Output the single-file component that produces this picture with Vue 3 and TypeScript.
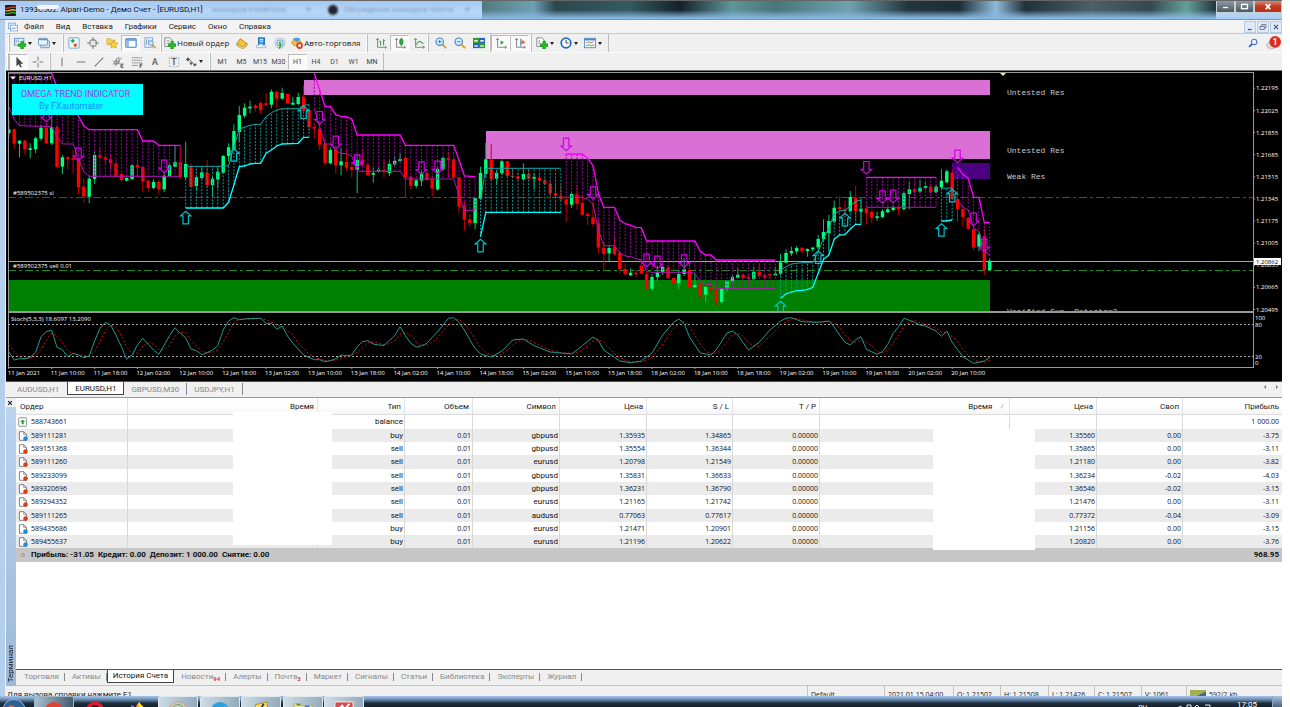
<script setup lang="ts">
type Candle = [up: 0 | 1, high: number, top: number, bottom: number, low: number]
type Point = [bar: number, level: number]
interface Band { tone: 'up' | 'down'; from: number; to: number; outer: Point[]; inner: Point[] }
interface Tool { icon: string; name: string; label?: string; menu?: boolean; pressed?: boolean }

const barX = (i: number) => Math.round((8.8 + i * 5.36) * 10) / 10
const levelY = (v: number) => Math.round((70 + v / 3) * 10) / 10
const stochY = (v: number) => Math.round((305 + v / 3) * 10) / 10

const candles: Candle[] = [
  [1,150,178,190,205],[0,175,178,221,238],[1,210,212,221,262],[0,210,212,238,254],[1,220,235,240,265],[1,200,205,238,250],
  [1,165,173,206,212],[0,160,174,220,222],[1,130,172,220,225],[0,168,171,291,292],[1,255,262,290,312],[0,258,262,267,298],
  [0,240,264,269,310],[0,262,265,352,372],[0,325,350,379,398],[1,318,326,380,400],[1,245,255,327,342],[0,235,256,262,268],
  [0,258,262,269,282],[0,255,268,280,300],[0,278,280,320,322],[0,308,312,330,335],[1,318,324,332,333],[1,282,286,327,330],
  [0,268,285,292,320],[0,290,291,334,365],[0,330,332,354,365],[1,328,336,354,358],[0,328,336,358,373],[1,308,317,358,366],
  [1,280,286,318,322],[1,228,276,291,292],[0,225,276,321,326],[1,215,282,322,330],[0,280,290,350,352],[1,315,322,348,362],
  [1,292,307,324,328],[0,270,308,345,355],[1,320,326,345,380],[1,292,305,328,355],[1,255,258,308,312],[1,220,232,258,275],
  [1,163,183,238,240],[1,108,135,186,215],[1,100,113,137,144],[1,92,110,115,130],[0,102,107,114,125],[0,95,99,120,132],
  [0,70,100,105,108],[1,58,65,104,115],[0,62,65,86,112],[1,53,69,86,88],[0,70,72,100,102],[1,80,98,104,105],
  [1,68,81,102,106],[0,45,80,122,125],[0,118,120,171,185],[0,160,171,176,205],[0,160,176,224,240],[0,205,221,279,288],
  [1,232,240,280,283],[0,236,240,285,310],[1,235,274,286,316],[0,240,276,293,302],[0,280,291,300,322],[1,255,270,300,370],
  [0,240,268,285,290],[0,280,284,316,318],[1,293,309,314,338],[1,292,299,304,308],[0,270,299,304,322],[1,272,281,309,318],
  [1,258,272,283,287],[1,250,267,273,277],[0,262,264,321,384],[0,318,320,347,358],[1,327,331,348,355],[1,300,309,332,348],
  [0,307,309,329,332],[0,315,328,356,380],[1,290,297,358,362],[1,260,264,298,302],[0,245,265,270,318],[0,262,268,323,325],
  [0,320,322,410,430],[0,392,407,449,482],[0,432,448,459,470],[1,380,384,459,478],[1,290,309,386,390],[1,218,268,312,320],
  [0,222,268,328,332],[1,300,309,326,345],[1,268,274,309,315],[0,272,273,318,320],[0,293,317,321,325],[0,310,319,327,330],
  [1,280,312,328,330],[0,295,312,327,328],[1,310,321,326,358],[0,315,324,331,335],[0,325,331,342,345],[0,330,342,370,385],
  [0,345,370,377,385],[0,345,378,388,395],[0,380,388,404,455],[1,365,372,404,415],[0,345,373,402,420],[0,375,399,434,438],
  [0,425,432,438,465],[0,395,442,462,470],[0,450,460,533,550],[0,515,533,552,600],[1,525,534,550,573],[0,495,530,552,555],
  [0,545,549,598,612],[0,580,597,613,615],[1,595,608,616,617],[0,600,608,613,622],[0,565,587,611,613],[0,606,613,656,658],
  [1,612,621,656,662],[1,585,606,621,632],[1,585,591,606,615],[0,588,592,624,628],[0,622,624,640,658],[1,600,612,640,658],
  [1,565,598,612,618],[0,580,600,652,653],[1,612,645,652,654],[0,640,642,676,686],[1,648,651,674,696],[0,645,652,658,668],
  [0,655,659,696,705],[1,655,656,696,702],[1,630,633,655,665],[1,615,621,634,640],[1,595,614,623,627],[0,613,614,624,630],
  [0,612,622,627,635],[1,590,605,627,630],[0,580,605,618,620],[0,612,616,621,625],[0,612,612,616,628],[1,590,611,616,618],
  [1,552,577,611,615],[1,538,549,578,580],[1,530,543,550,558],[1,528,534,544,553],[0,532,533,543,550],[1,535,537,543,560],
  [1,530,533,538,545],[1,495,507,532,540],[1,448,486,507,512],[1,435,453,489,545],[1,392,413,455,460],[0,378,411,417,425],
  [0,392,418,424,440],[1,363,381,424,428],[0,348,384,423,450],[1,385,416,425,460],[0,412,415,430,464],[0,420,426,443,460],
  [1,425,439,444,452],[1,418,424,441,445],[1,412,418,427,430],[1,405,412,420,425],[0,405,412,417,434],[1,365,370,417,422],
  [1,335,358,372,418],[0,355,358,365,370],[1,330,353,365,370],[1,335,349,354,360],[0,345,350,367,370],[1,345,350,367,370],
  [1,298,332,352,355],[1,298,304,337,340],[0,300,308,387,390],[0,380,387,417,455],[0,410,417,441,470],[0,440,443,476,480],
  [0,475,477,532,540],[1,485,493,530,543],[0,475,498,600,615],[1,565,572,600,601],
]

const bands: Band[] = [
  { tone: 'down', from: 0, to: 32,
    outer: [[0,10],[8,10],[9,52],[10,78],[11,100],[12,112],[13,138],[14,167],[15,179],[24,179],[25,213],[27,213],[28,226],[32,226]],
    inner: [[0,110],[1,148],[2,167],[8,170],[9,200],[10,222],[12,222],[13,265],[14,305],[15,319],[32,319]] },
  { tone: 'up', from: 33, to: 56,
    outer: [[33,414],[40,414],[41,397],[42,345],[43,290],[44,288],[45,282],[46,280],[47,280],[48,250],[49,240],[50,228],[51,222],[54,220],[55,202],[56,202]],
    inner: [[33,289],[40,289],[41,287],[42,230],[43,178],[44,171],[45,166],[46,163],[47,163],[48,140],[49,128],[50,120],[51,116],[54,116],[55,106],[56,104]] },
  { tone: 'down', from: 57, to: 87,
    outer: [[57,10],[58,60],[59,109],[60,109],[61,134],[62,139],[63,140],[64,147],[65,195],[73,195],[74,226],[83,226],[84,270],[85,318],[87,320]],
    inner: [[57,118],[58,170],[59,222],[60,222],[61,243],[62,250],[63,251],[64,258],[65,304],[73,304],[74,327],[83,327],[84,375],[85,421],[87,421]] },
  { tone: 'up', from: 88, to: 103, outer: [[88,500],[89,427],[103,427]], inner: [[88,390],[89,295],[103,295]] },
  { tone: 'down', from: 104, to: 143,
    outer: [[104,252],[107,252],[108,265],[109,287],[110,370],[111,412],[113,412],[114,450],[115,461],[116,465],[117,472],[118,473],[119,513],[128,513],[129,543],[130,555],[131,555],[132,570],[143,570]],
    inner: [[104,382],[107,382],[108,388],[109,402],[110,480],[111,527],[113,527],[114,548],[115,558],[116,560],[117,566],[118,570],[119,604],[120,607],[127,607],[128,610],[129,635],[130,643],[131,643],[132,655],[143,655]] },
  { tone: 'up', from: 144, to: 159,
    outer: [[144,685],[145,672],[146,666],[147,662],[148,661],[149,659],[150,652],[151,610],[152,568],[153,555],[154,508],[155,495],[156,494],[157,477],[158,463],[159,463]],
    inner: [[144,600],[145,590],[146,582],[147,580],[148,578],[150,577],[151,545],[152,505],[153,475],[154,432],[155,423],[156,421],[157,408],[158,394],[159,390]] },
  { tone: 'down', from: 160, to: 173, outer: [[160,322],[173,322]], inner: [[160,412],[173,412]] },
  { tone: 'up', from: 174, to: 176, outer: [[174,453],[175,453],[176,450]], inner: [[174,355],[175,355],[176,353]] },
  { tone: 'down', from: 177, to: 183,
    outer: [[177,292],[178,313],[179,325],[180,382],[181,382],[182,458],[183,458]],
    inner: [[177,390],[178,412],[179,420],[180,474],[181,485],[182,540],[183,558]] },
]

const downArrows: Point[] = [[7,155],[13,272],[29,308],[58,162],[61,236],[65,292],[77,313],[80,311],[104,242],[109,388],[119,590],[121,596],[126,592],[160,312],[163,400],[165,398],[177,278],[180,467],[182,545]]
const upArrows: Point[] = [[33,424],[42,236],[55,108],[88,508],[144,694],[151,543],[156,430],[174,461],[176,358]]

const stochKeys: Point[] = [
  ...[140,165,161,161,157,143,95,80,76,127,134,155,145,150,158,153,108,70,52,60,90,125,163,150,120,100,118,135,148,120,92,68,85,98,132,137,149,143,135,122,75,48,38,44,42,41,40,40,55,55,73,63,93,115,132,150,157,164,164,170,167,161,150,152,150,125,110,107,117,120,121,106,92,65,92,115,126,122,115].map((v, i): Point => [i, v]),
  [80,80],[82,40],[83,38],[84,52],[85,75],[86,104],[87,130],[88,147],[90,156],[92,138],[94,105],[96,102],[98,122],[101,141],[105,147],[107,122],[109,96],[110,106],[111,135],[114,168],[116,173],[118,168],[120,144],[122,90],[124,52],[125,42],[126,56],[127,96],[129,144],[131,150],[132,134],[134,84],[135,78],[136,90],[138,135],[140,112],[142,75],[144,48],[145,40],[146,38],[148,50],[151,52],[153,48],[154,66],[155,90],[156,112],[157,120],[158,104],[159,95],
  [160,133],[162,148],[163,140],[164,118],[165,85],[166,65],[167,40],[168,46],[169,52],[170,60],[171,63],[173,78],[174,94],[175,78],[176,112],[178,155],[180,175],[182,168],[183,157],
]

function valueAt(points: Point[], bar: number): number {
  for (let k = 1; k < points.length; k++) {
    const [b0, v0] = points[k - 1]
    const [b1, v1] = points[k]
    if (bar <= b1) return v0 + ((v1 - v0) * (bar - b0)) / (b1 - b0)
  }
  return points[points.length - 1][1]
}
const range = (a: number, b: number) => Array.from({ length: b - a + 1 }, (_, k) => a + k)
const line = (points: Point[]) => points.map(([b, v]) => `${barX(b)},${levelY(v)}`).join(' ')
const stems = (band: Band) => range(band.from, band.to)
  .map(b => `M${barX(b)} ${levelY(valueAt(band.outer, b))}V${levelY(valueAt(band.inner, b))}`).join('')

const stoch = range(0, 183).map(b => valueAt(stochKeys, b))
const signal = stoch.map((v, i) => i === 0 ? 118 : i === 1 ? 140 : (v + stoch[i - 1] + stoch[i - 2]) / 3)
const stochLine = (values: number[]) => values.map((v, i) => `${barX(i)},${stochY(v)}`).join(' ')

const prices = ['1.22195', '1.22025', '1.21855', '1.21685', '1.21515', '1.21345', '1.21175', '1.21005', '1.20835', '1.20665', '1.20495']
const times = ['11 Jan 2021', '11 Jan 10:00', '11 Jan 18:00', '12 Jan 02:00', '12 Jan 10:00', '12 Jan 18:00', '13 Jan 02:00', '13 Jan 10:00', '13 Jan 18:00', '14 Jan 02:00', '14 Jan 10:00', '14 Jan 18:00', '15 Jan 02:00', '15 Jan 10:00', '15 Jan 18:00', '18 Jan 02:00', '18 Jan 10:00', '18 Jan 18:00', '19 Jan 02:00', '19 Jan 10:00', '19 Jan 18:00', '20 Jan 02:00', '20 Jan 10:00']

const menus = ['Файл', 'Вид', 'Вставка', 'Графики', 'Сервис', 'Окно', 'Справка']

const plus = '<path d="M7 5h3v3h3v3h-3v3H7v-3H4V8h3z" fill="#1fc01f" stroke="#0b7d12" stroke-width=".6"/>'
const axes = '<path d="M3 2v10h10M1.500 3.500 3 1.500 4.500 3.500M11.500 10.500 13.500 12 11.500 13.500" fill="none" stroke="#777" stroke-width="1"/>'
const icons: Record<string, string> = {
  newChart: '<rect x=".5" y="1.500" width="11" height="8" fill="#e8f3fd" stroke="#5b8fc4"/><path d="M2.500 3v4M5 3v3" stroke="#5b8fc4"/><g transform="translate(1 0)">' + plus + '</g>',
  profiles: '<rect x="3" y="4.500" width="10.500" height="8" rx="1" fill="#cfe2f5" stroke="#5b8fc4"/><rect x=".5" y="1.500" width="10.500" height="8" rx="1" fill="#eaf4fd" stroke="#5b8fc4"/><path d="M1 3h10" stroke="#5b8fc4" stroke-width="1.500"/>',
  market: '<rect x="1" y="1" width="12" height="12" rx="1" fill="#eef7ff" stroke="#5f9ed6"/><path d="M3 4.500 5.500 2 8 4.500 5.500 7z" fill="#21a53a"/><path d="M6 9.500 8.500 7l2.500 2.500-2.500 2.500z" fill="#e2571c"/>',
  cross: '<circle cx="7" cy="7" r="4" fill="none" stroke="#888" stroke-width="1.300"/><path d="M7 0v5M7 9v5M0 7h5M9 7h5" stroke="#888" stroke-width="1.300"/>',
  navigator: '<path d="M1 2h4l1 1.500h4V9H1z" fill="#f7d35c" stroke="#c79a1a" stroke-width=".7"/><path d="m9 4 1.500 3 3.300.4-2.400 2.200.6 3.300L9 11.300l-3 1.600.6-3.300-2.400-2.200L7.500 7z" fill="#ffd93b" stroke="#b98b10" stroke-width=".7"/>',
  terminal: '<rect x="1" y="2" width="12" height="10" rx="1" fill="#fff" stroke="#3f7fc8" stroke-width="1.300"/><path d="M1.500 3.500h11" stroke="#3f7fc8" stroke-width="1.500"/><rect x="2" y="4.500" width="2.500" height="7" fill="#8bb8e6"/>',
  tester: '<rect x="1" y="1" width="9" height="11" fill="#eaf3fb" stroke="#7aa3cc"/><path d="M3 3v6M5.500 3v5" stroke="#6f96be"/><circle cx="8" cy="7" r="2.800" fill="#cfe6fa" stroke="#6d8fb3"/><path d="m10 9 3.500 4" stroke="#e0a325" stroke-width="2"/>',
  order: '<path d="M1 1h6l2.500 2.500V11H1z" fill="#fff" stroke="#777"/><path d="M3 4h4M3 6h4M3 8h3" stroke="#888" stroke-width=".8"/><g transform="translate(1 0)">' + plus + '</g>',
  book: '<path d="m1 8 4-6 8 6-5 4z" fill="#f6c33c" stroke="#b37b12"/><path d="m1 8v2l7 4 5-4V8l-5 4z" fill="#fdf0c4" stroke="#b37b12" stroke-width=".8"/>',
  vps: '<rect x="4" y="1" width="7" height="8" fill="#3a8ee0" stroke="#1d62a8"/><path d="M5.500 3h4M5.500 5h4" stroke="#fff"/><path d="M2 12.500c-1.500-3 1.500-4 2.500-3 1-2 4-2 4.500 0 3-1 4.500 1 3.500 3z" fill="#e4effa" stroke="#7ca7d0" stroke-width=".8"/>',
  signals: '<circle cx="7" cy="7" r="5.800" fill="none" stroke="#b0c4cf" stroke-width="1.200"/><circle cx="7" cy="7" r="3.600" fill="none" stroke="#5f9fc9" stroke-width="1.200"/><circle cx="7" cy="7" r="1.500" fill="#3aa94b"/><path d="M7 7.500c1 2 .5 4-1 6" stroke="#3aa94b" stroke-width="2" fill="none"/>',
  auto: '<path d="m0 6 6-4 6 3-2 5H3z" fill="#f3bf3a" stroke="#b07b14" stroke-width=".6"/><path d="M2 3c1-3 8-3 9 0L7 6z" fill="#4f9fe0"/><circle cx="10" cy="10" r="3.900" fill="#e23a1b"/><rect x="8.500" y="8.500" width="3" height="3" fill="#fff"/>',
  bars: axes + '<path d="M6.500 5v5M6.500 5H5M10 2.500v7M10 4h1.500" stroke="#2f9e3c" stroke-width="1.200"/>',
  candles: axes + '<path d="M8.500 1v10" stroke="#1e8b2c"/><rect x="6.800" y="2.500" width="3.500" height="6" rx="1" fill="#23b336" stroke="#1e8b2c"/>',
  lineChart: axes + '<path d="M4 9c2-5 4-5 8-1" fill="none" stroke="#2f9e3c" stroke-width="1.200"/>',
  zoomIn: '<circle cx="5.500" cy="5.500" r="4.300" fill="#d9ecfb" stroke="#3d86cc" stroke-width="1.300"/><path d="m9 9 4 4" stroke="#e0a325" stroke-width="2.400"/><path d="M3.500 5.500h4M5.500 3.500v4" stroke="#3d86cc" stroke-width="1.200"/>',
  zoomOut: '<circle cx="5.500" cy="5.500" r="4.300" fill="#d9ecfb" stroke="#3d86cc" stroke-width="1.300"/><path d="m9 9 4 4" stroke="#e0a325" stroke-width="2.400"/><path d="M3.500 5.500h4" stroke="#3d86cc" stroke-width="1.200"/>',
  tile: '<rect x="0" y="1" width="7" height="6" fill="#2f9e2f"/><rect x="7" y="1" width="7" height="6" fill="#2b62c0"/><rect x="0" y="7" width="7" height="6" fill="#2b62c0"/><rect x="7" y="7" width="7" height="6" fill="#2f9e2f"/><path d="M1.500 4.500h4M8.500 4.500h4M1.500 10.500h4M8.500 10.500h4" stroke="#dff0df" stroke-width="2"/>',
  scroll: axes + '<path d="m6.500 4 4 2.500-4 2.500z" fill="#28a838"/>',
  shift: axes + '<path d="M8 2v9" stroke="#3b6ea8" stroke-width="1.200"/><path d="M13 6H9.500M11 4 9 6l2 2" stroke="#d8491e" stroke-width="1.200" fill="none"/>',
  indicator: '<path d="M1 1h6l2.500 2.500V11H1z" fill="#fff" stroke="#777"/><path d="M4 3.500c-1 2 1 3-1 5" stroke="#777" fill="none"/><g transform="translate(1 0)">' + plus + '</g>',
  clock: '<circle cx="7" cy="7" r="5.600" fill="#f4faff" stroke="#1e6cc0" stroke-width="2"/><path d="M7 3.500V7h3" fill="none" stroke="#444" stroke-width="1.100"/>',
  template: '<rect x=".5" y="1.500" width="13" height="11" fill="#f6fbff" stroke="#4a87c6"/><path d="M1 3h12" stroke="#4a87c6" stroke-width="2"/><path d="M2.500 7 5 5.500 8 7l3-1.500" stroke="#d34b2b" fill="none"/><path d="M2.500 10.500 6 9l2 1.500L12 9" stroke="#2f9e3c" fill="none"/>',
  cursor: '<path d="M4 1v11l2.600-2.400L8.500 13.500l1.700-.9L8.500 9H12z" fill="#444"/>',
  crosshair: '<path d="M7 1v4.500M7 8.500V13M1 7h4.500M8.500 7H13" stroke="#777" stroke-width="1.200"/>',
  vline: '<path d="M7 2v10" stroke="#777" stroke-width="1.200"/>',
  hline: '<path d="M2 7h10" stroke="#777" stroke-width="1.200"/>',
  trend: '<path d="M2 12 12 2" stroke="#777" stroke-width="1.200"/>',
  channel: '<path d="M1 10 7 2M3 12l8-10M1 6l8 1M2 9h8M8 1v7M5 3v8" stroke="#777" stroke-width=".9"/><path d="M13.500 9.500H10.500v4h3M10.500 11.500h2.500" stroke="#444" fill="none"/>',
  fibo: '<path d="M1 2h12M1 5h12M1 8h12M1 11h7" stroke="#777" stroke-dasharray="2 .6"/><path d="M13.500 9.500h-3v4.500M10.500 11.500h2.500" stroke="#444" fill="none"/>',
  text: '<text x="7" y="11" text-anchor="middle" font-size="11" font-weight="700" fill="#777">A</text>',
  label: '<rect x="1.500" y="1.500" width="11" height="11" fill="none" stroke="#999" stroke-dasharray="1 1"/><text x="7" y="11" text-anchor="middle" font-size="10" font-weight="700" fill="#666">T</text>',
  arrows: '<path d="m1 4 2.500-2.500L6 4 3.500 6.500zM5 7l4 1-2 3zM9 9l2.500 3.500L14 9z" fill="#555"/><path d="m5 4 5 5" stroke="#555"/>',
}

const group1: Tool[] = [{ icon: 'newChart', name: 'Новый график', menu: true }, { icon: 'profiles', name: 'Профили', menu: true }]
const group2: Tool[] = [{ icon: 'market', name: 'Обзор рынка' }, { icon: 'cross', name: 'Окно данных' }, { icon: 'navigator', name: 'Навигатор' }, { icon: 'terminal', name: 'Терминал', pressed: true }, { icon: 'tester', name: 'Тестер' }]
const group3: Tool[] = [{ icon: 'order', name: 'Новый ордер', label: 'Новый ордер' }, { icon: 'book', name: 'Редактор' }, { icon: 'vps', name: 'Хостинг' }, { icon: 'signals', name: 'Сигналы' }, { icon: 'auto', name: 'Авто-торговля', label: 'Авто-торговля' }]
const group4: Tool[] = [{ icon: 'bars', name: 'Бары' }, { icon: 'candles', name: 'Свечи', pressed: true }, { icon: 'lineChart', name: 'Линия' }]
const group5: Tool[] = [{ icon: 'zoomIn', name: 'Увеличить' }, { icon: 'zoomOut', name: 'Уменьшить' }, { icon: 'tile', name: 'Плитка' }]
const group6: Tool[] = [{ icon: 'scroll', name: 'Автопрокрутка', pressed: true }, { icon: 'shift', name: 'Сдвиг', pressed: true }]
const group7: Tool[] = [{ icon: 'indicator', name: 'Индикаторы', menu: true }, { icon: 'clock', name: 'Периоды', menu: true }, { icon: 'template', name: 'Шаблоны', menu: true }]
const mainGroups = [group1, group2, group3, group4, group5, group6, group7]
const drawGroups: Tool[][] = [
  [{ icon: 'cursor', name: 'Курсор', pressed: true }, { icon: 'crosshair', name: 'Перекрестие' }],
  [{ icon: 'vline', name: 'Вертикаль' }, { icon: 'hline', name: 'Горизонталь' }, { icon: 'trend', name: 'Тренд' }, { icon: 'channel', name: 'Канал' }, { icon: 'fibo', name: 'Фибоначчи' }, { icon: 'text', name: 'Текст' }, { icon: 'label', name: 'Метка' }, { icon: 'arrows', name: 'Стрелки', menu: true }],
]
const periods = ['M1', 'M5', 'M15', 'M30', 'H1', 'H4', 'D1', 'W1', 'MN']
const chartTabs = ['AUDUSD,H1', 'EURUSD,H1', 'GBPUSD,M30', 'USDJPY,H1']

const columns = [
  { title: 'Ордер', width: 112 }, { title: 'Время', width: 190 }, { title: 'Тип', width: 87 }, { title: 'Объем', width: 68 },
  { title: 'Символ', width: 87 }, { title: 'Цена', width: 87 }, { title: 'S / L', width: 86 }, { title: 'T / P', width: 87 },
  { title: 'Время', width: 190, sorted: true }, { title: 'Цена', width: 87 }, { title: 'Своп', width: 86 }, { title: 'Прибыль', width: 99 },
]
const orders = [
  ['588743661', 'balance', '', '', '', '', '', '', '', '1 000.00'],
  ['589111281', 'buy', '0.01', 'gbpusd', '1.35935', '1.34865', '0.00000', '1.35560', '0.00', '-3.75'],
  ['589151368', 'sell', '0.01', 'gbpusd', '1.35554', '1.36344', '0.00000', '1.35865', '0.00', '-3.11'],
  ['589111260', 'sell', '0.01', 'eurusd', '1.20798', '1.21549', '0.00000', '1.21180', '0.00', '-3.82'],
  ['589233099', 'sell', '0.01', 'gbpusd', '1.35831', '1.36633', '0.00000', '1.36234', '-0.02', '-4.03'],
  ['589320696', 'sell', '0.01', 'gbpusd', '1.36231', '1.36790', '0.00000', '1.36546', '-0.02', '-3.15'],
  ['589294352', 'sell', '0.01', 'eurusd', '1.21165', '1.21742', '0.00000', '1.21476', '0.00', '-3.11'],
  ['589111265', 'sell', '0.01', 'audusd', '0.77063', '0.77617', '0.00000', '0.77372', '-0.04', '-3.09'],
  ['589435686', 'buy', '0.01', 'eurusd', '1.21471', '1.20901', '0.00000', '1.21156', '0.00', '-3.15'],
  ['589455637', 'buy', '0.01', 'eurusd', '1.21196', '1.20622', '0.00000', '1.20820', '0.00', '-3.76'],
].map(([id, type, volume, symbol, open, sl, tp, close, swap, profit]) => ({ id, type, volume, symbol, open, sl, tp, close, swap, profit }))

const terminalTabs = [
  { title: 'Торговля' }, { title: 'Активы' }, { title: 'История Счета', active: true }, { title: 'Новости', count: '94' }, { title: 'Алерты' },
  { title: 'Почта', count: '3' }, { title: 'Маркет' }, { title: 'Сигналы' }, { title: 'Статьи' }, { title: 'Библиотека' }, { title: 'Эксперты' }, { title: 'Журнал' },
]
</script>

<template>
  <div class="window">
    <header class="titlebar">
      <svg class="app-icon" viewBox="0 0 12 12"><rect width="12" height="12" rx="1" fill="#1b1b12" /><path d="M0 3c4 2 7-3 12 0" stroke="#e03a1c" stroke-width="1.500" fill="none" /><path d="M0 6c4 2 7-3 12 0" stroke="#e8b020" stroke-width="1.500" fill="none" /><path d="M0 9c4 2 7-3 12 0" stroke="#2fae3c" stroke-width="1.500" fill="none" /></svg>
      <h1><span class="account">1393C502:</span> Alpari-Demo - Демо Счет - [EURUSD,H1]</h1>
      <span class="ghost first">конкурса InstaForex</span>
      <span class="ghost cross">✕</span>
      <span class="ghost dot"></span>
      <span class="ghost">Обсуждение конкурса «Demo</span>
      <span class="ghost cross">✕</span>
      <div class="aero"></div>
      <div class="win-buttons">
        <button aria-label="Свернуть"><svg viewBox="0 0 20 12"><rect x="6.500" y="6" width="7" height="2.500" fill="#fff" stroke="#444" stroke-width=".6" /></svg></button>
        <button aria-label="Развернуть"><svg viewBox="0 0 20 12"><rect x="6.500" y="3.500" width="7" height="5" fill="none" stroke="#fff" stroke-width="1.600" /></svg></button>
        <button class="close" aria-label="Закрыть"><svg viewBox="0 0 28 12"><path d="m11.500 3.500 5 5.500m0-5.500-5 5.500" stroke="#fff" stroke-width="2" /></svg></button>
      </div>
    </header>

    <div class="body">
      <nav class="menubar">
        <svg class="menu-icon" viewBox="0 0 14 14"><rect x=".5" y="1.500" width="10" height="8" fill="#d7eafb" stroke="#6ba0d6" /><rect x="3.500" y="4.500" width="10" height="8" fill="#fff" stroke="#6ba0d6" /><path d="M5 10.500 7 8l2 2 3-3" stroke="#3b79ba" fill="none" /></svg>
        <button v-for="m in menus" :key="m">{{ m }}</button>
        <div class="mdi">
          <button aria-label="Свернуть график"><svg viewBox="0 0 12 12"><path d="M3.500 9h4.500" stroke="#555" stroke-width="1.500" /></svg></button>
          <button aria-label="Восстановить график"><svg viewBox="0 0 12 12"><path d="M4.500 5V3h5v4H8" stroke="#667" fill="none" /><rect x="2.500" y="5.500" width="5" height="3.500" fill="none" stroke="#667" /></svg></button>
          <button aria-label="Закрыть график"><svg viewBox="0 0 12 12"><path d="m3.500 3.500 5 5m0-5-5 5" stroke="#556" stroke-width="1.400" /></svg></button>
        </div>
      </nav>

      <div class="toolbar main">
        <div v-for="(g, gi) in mainGroups" :key="gi" class="group" :class="'g' + (gi + 1)">
          <button v-for="t in g" :key="t.icon" class="tool" :class="{ pressed: t.pressed, menu: t.menu, labelled: t.label }" :aria-label="t.name">
            <svg viewBox="0 0 14 14" v-html="icons[t.icon]"></svg>
            <span v-if="t.label">{{ t.label }}</span>
            <i v-if="t.menu" class="caret"></i>
          </button>
        </div>
        <div class="right-tools">
          <button class="plain" aria-label="Поиск"><svg viewBox="0 0 14 14"><circle cx="8.500" cy="5.500" r="3.800" fill="#eef4ff" stroke="#4a74d8" stroke-width="1.500" /><path d="m5.500 8.500-4 4" stroke="#3157bd" stroke-width="2.200" /></svg></button>
          <button class="plain notice" aria-label="Уведомления"><svg viewBox="0 0 18 18"><ellipse cx="7" cy="11" rx="6" ry="4" fill="#ddd" stroke="#aaa" /><path d="m4 14-.5 3L8 14.500" fill="#ccc" /><circle cx="11" cy="7" r="7" fill="#dc2f19" /><text x="11" y="10.500" text-anchor="middle" font-size="10" font-weight="700" fill="#fff">1</text></svg></button>
        </div>
      </div>

      <div class="toolbar draw">
        <div v-for="(g, gi) in drawGroups" :key="gi" class="group" :class="'d' + (gi + 1)">
          <button v-for="t in g" :key="t.icon" class="tool" :class="{ pressed: t.pressed, menu: t.menu }" :aria-label="t.name">
            <svg viewBox="0 0 14 14" v-html="icons[t.icon]"></svg>
            <i v-if="t.menu" class="caret"></i>
          </button>
        </div>
        <div class="group d3">
          <button v-for="p in periods" :key="p" class="tool period" :class="{ pressed: p === 'H1' }">{{ p }}</button>
        </div>
      </div>

      <svg class="chart" viewBox="6 70 1276 311" role="img" aria-label="EURUSD,H1">
        <defs>
          <clipPath id="main-pane"><rect x="8" y="73" width="1245" height="238" /></clipPath>
          <path id="arrow-down" d="M-2.700-12.500H2.700V-4.600H5.200L0 0-5.200-4.600H-2.700Z" />
          <path id="arrow-up" d="M-2.700 12.500H2.700V4.600H5.200L0 0-5.200 4.600H-2.700Z" />
        </defs>
        <rect x="6" y="70" width="1276" height="311" fill="#000" />
        <path d="M6 70.500H1282" stroke="#777" />
        <g clip-path="url(#main-pane)">
          <g shape-rendering="crispEdges">
            <path d="M8 197.500H1253" stroke="#c81414" stroke-dasharray="8 3 3 3" />
            <path d="M8 270.500H1253" stroke="#1c8a1c" stroke-dasharray="8 3 3 3" />
            <rect x="304" y="80" width="686" height="15" fill="#da70d6" />
            <rect x="486" y="131" width="504" height="28" fill="#da70d6" />
            <rect x="952" y="163" width="38" height="16" fill="#4b0082" />
            <rect x="8" y="280" width="982" height="32" fill="#008000" />
            <path d="M8 261.500H1253" stroke="#b8b060" />
          </g>
          <g v-for="(c, i) in candles" :key="i" :class="c[0] ? 'bull' : 'bear'">
            <path :d="`M${barX(i)} ${levelY(c[1])}V${levelY(c[4])}`" />
            <rect :x="barX(i) - 1.700" :y="levelY(c[2])" width="3.400" :height="(c[3] - c[2]) / 3" />
          </g>
          <g v-for="(b, i) in bands" :key="'b' + i" :class="b.tone" class="band">
            <path class="stems" :d="stems(b)" />
            <polyline class="inner" :points="line(b.inner)" />
            <polyline class="outer" :points="line(b.outer)" />
          </g>
          <g fill="none" stroke="#d400e8" stroke-width="1.200"><use v-for="(a, i) in downArrows" :key="i" href="#arrow-down" :x="barX(a[0])" :y="levelY(a[1])" /></g>
          <g fill="none" stroke="#00c4cc" stroke-width="1.200"><use v-for="(a, i) in upArrows" :key="i" href="#arrow-up" :x="barX(a[0])" :y="levelY(a[1])" /></g>
          <path d="M1000 73h6l-3 3z" fill="#f3e98a" />
          <g class="mono"><text x="1007" y="95">Untested Res</text><text x="1007" y="153">Untested Res</text><text x="1007" y="179">Weak Res</text><text x="1007" y="314">Verified Sup, Retests=3</text></g>
          <path d="M10 76.500h6l-3 3z" fill="#fff" />
          <g class="small"><text x="19" y="80">EURUSD,H1</text><text x="13" y="195">#589502375 sl</text><text x="13" y="268">#589502375 sell 0.01</text></g>
        </g>
        <rect x="12" y="84" width="131" height="31" fill="#0ff" />
        <g class="comment"><text x="21" y="97" fill="#a040e8">OMEGA TREND INDICATOR</text><text x="39" y="109" fill="#1e90ff">By FXautomater</text></g>

        <g fill="none" stroke="#999" shape-rendering="crispEdges">
          <path d="M8.500 311V72.500H1253.500V367.500H8.500V311" />
          <path d="M8 312H1254" stroke-width="2" />
          <path d="M8 324.500H1253M8 356.500H1253" stroke="#aaa" stroke-dasharray="2 2" />
        </g>
        <polyline :points="stochLine(signal)" fill="none" stroke="#d40f0f" stroke-dasharray="2 2" />
        <polyline :points="stochLine(stoch)" fill="none" stroke="#209a90" />
        <g class="small">
          <text x="11" y="321">Stoch(5,3,3) 18.6097 13.2090</text>
          <text v-for="(p, i) in prices" :key="p" x="1256" :y="levelY(55 + i * 66.35) + 2">{{ p }}</text>
          <text v-for="(t, i) in times" :key="t" :x="barX(i * 8) - 1" y="375">{{ t }}</text>
          <text x="1255" y="320">100</text><text x="1255" y="327">80</text><text x="1255" y="359">20</text><text x="1255" y="365">0</text>
        </g>
        <path v-for="(p, i) in prices" :key="'t' + p" :d="`M1253 ${levelY(55 + i * 66.35)}h2`" stroke="#999" />
        <path v-for="(t, i) in times" :key="'x' + t" :d="`M${barX(i * 8)} 367v2`" stroke="#999" />
        <rect x="1254" y="258" width="27" height="7" fill="#fff" />
        <text x="1256" y="264" class="current">1.20862</text>
      </svg>

      <nav class="chart-tabs">
        <button v-for="t in chartTabs" :key="t" :class="{ active: t === 'EURUSD,H1' }">{{ t }}</button>
        <div class="scrollers"><button aria-label="Назад"><i class="left"></i></button><button aria-label="Вперед"><i class="next"></i></button></div>
      </nav>

      <section class="terminal">
        <aside><button class="x" aria-label="Закрыть терминал"><svg viewBox="0 0 8 8"><path d="m1.500 1.500 5 5m0-5-5 5" stroke="#222" stroke-width="1.500" /></svg></button><div class="strip"><span>Терминал</span></div></aside>
        <div class="content">
          <div class="history">
            <table>
              <colgroup><col v-for="(c, i) in columns" :key="i" :style="{ width: c.width + 'px' }"></colgroup>
              <thead><tr><th v-for="(c, i) in columns" :key="i" :class="{ sorted: c.sorted }">{{ c.title }}<span v-if="c.sorted">⁄</span></th></tr></thead>
              <tbody>
                <tr v-for="o in orders" :key="o.id">
                  <td class="id">
                    <svg viewBox="0 0 14 14">
                      <template v-if="o.type === 'balance'"><rect x="1" y="1" width="11" height="12" rx="1" fill="#fff" stroke="#888" stroke-width="1.300" /><path d="M6.500 3.500 10 7H8v3H5V7H3z" fill="#1fae2c" /></template>
                      <template v-else><path d="M2 1h6l4 4v8H2z" fill="#fff" stroke="#777" stroke-width="1.300" /><path d="M8 1v4h4" fill="none" stroke="#777" /><circle cx="10.500" cy="10.500" r="3.200" :fill="o.type === 'buy' ? '#1a8de0' : '#e03c14'" /></template>
                    </svg>{{ o.id }}
                  </td>
                  <td></td><td class="word">{{ o.type }}</td><td>{{ o.volume }}</td><td class="word">{{ o.symbol }}</td><td>{{ o.open }}</td><td>{{ o.sl }}</td><td>{{ o.tp }}</td><td></td><td>{{ o.close }}</td><td>{{ o.swap }}</td><td>{{ o.profit }}</td>
                </tr>
              </tbody>
              <tfoot><tr><td colspan="11"><i class="bullet"></i>Прибыль: -31.05&nbsp; Кредит: 0.00&nbsp; Депозит: 1 000.00&nbsp; Снятие: 0.00</td><td>968.95</td></tr></tfoot>
            </table>
            <div class="mask open"></div>
            <div class="mask closed"></div>
          </div>
          <nav class="terminal-tabs">
            <button v-for="t in terminalTabs" :key="t.title" :class="{ active: t.active }">{{ t.title }}<sub v-if="t.count">{{ t.count }}</sub></button>
          </nav>
        </div>
      </section>

      <footer class="status">
        <span class="hint">Для вызова справки нажмите F1</span>
        <span class="s1">Default</span><span class="s2">2021.01.15 04:00</span><span class="s3">O: 1.21502</span><span class="s4">H: 1.21508</span><span class="s5">L: 1.21426</span><span class="s6">C: 1.21507</span><span class="s7">V: 1061</span>
        <span class="s8"><svg viewBox="0 0 16 8"><path d="M1 0v8M3 0v8M5 0v8M7 0v8M9 0v8M11 0v8M13 0v8M15 0v8" stroke="#8a9a1c" stroke-width="1.500" /><path d="M5 7v1M7 6v2M9 5v3M11 4v4M13 3v5M15 2v6" stroke="#1c5a86" stroke-width="1.500" /></svg>592/2 kb</span>
      </footer>
    </div>

    <div class="taskbar">
      <button class="orb" aria-label="Пуск"><svg viewBox="0 0 26 26"><circle cx="13" cy="13" r="12.500" fill="#2d5f92" stroke="#9fc3e0" /><path d="M7 8c2-1.500 4-1.500 6 0v5H7z" fill="#e8622a" /><path d="M13 8c2 1 4 1 6 0v5h-6z" fill="#8cc63e" /></svg></button>
      <button class="task lit" aria-label="Chrome"><svg viewBox="0 0 22 22"><circle cx="11" cy="11" r="10" fill="#e24234" /><circle cx="11" cy="12" r="5" fill="#fff" /><circle cx="11" cy="12" r="3.800" fill="#3f83f0" /><path d="M16 8h5c1 4-1 8-4 10z" fill="#fbc72c" /></svg></button>
      <button class="task" aria-label="Opera"><svg viewBox="0 0 22 22"><ellipse cx="11" cy="11" rx="8" ry="8.500" fill="none" stroke="#e0182c" stroke-width="4" /></svg></button>
      <button class="task" aria-label="Firefox"><svg viewBox="0 0 22 22"><path d="M1 12C1 6 5 8 5 4c3 1 3 3 5 3 0-3 2-5 4-6 0 4 7 5 7 12 0 12-20 12-20-1z" fill="#fb7a1f" /><path d="M14 1c0 4 7 5 6 11-2-4-8-3-8-7 0-2 1-3 2-4z" fill="#ffd52e" /><path d="M1 11C1 6 5 8 5 4c2 1 3 3 3 5z" fill="#8b3ad0" /></svg></button>
      <button class="task running" aria-label="Терминал MetaTrader"><svg viewBox="0 0 22 22"><circle cx="11" cy="11" r="10" fill="#c9cdb5" stroke="#d86a50" stroke-dasharray="1 1" /><circle cx="11" cy="11" r="7" fill="none" stroke="#5f9a62" /><circle cx="11" cy="11" r="4" fill="none" stroke="#c7813f" /></svg></button>
      <button class="task running" aria-label="Telegram"><svg viewBox="0 0 22 22"><circle cx="11" cy="11" r="10" fill="#2ba0dc" /><path d="m4 11 13-5-2 10-6-3z" fill="#fff" /></svg></button>
      <button class="task running" aria-label="Заметки"><svg viewBox="0 0 22 22"><path d="M5 4 18 1v18H3z" fill="#f5dc68" stroke="#a98b26" /><path d="m14 3-4 7" stroke="#333" stroke-width="2" /></svg></button>
      <button class="task running" aria-label="Проводник"><svg viewBox="0 0 22 22"><path d="M1 3h7l1 2h12v14H1z" fill="#f4dc8c" stroke="#c9a64a" /><path d="M4 4h4" stroke="#3a9a48" stroke-width="2" /><path d="M13 6h5" stroke="#3c80c8" stroke-width="2" /></svg></button>
      <button class="task running" aria-label="Редактор"><svg viewBox="0 0 22 22"><rect x="1" y="1" width="20" height="18" fill="#d84a50" stroke="#fff" /><path d="m5 9 4-4 3 4 5-6" stroke="#fff" stroke-width="2" fill="none" /></svg></button>
      <span class="lang">RU</span>
      <svg class="tray" viewBox="0 0 50 10"><path d="M2 8h6M14 8l4-2v4M24 9V5h4v4M31 8l3-3 3 3M42 5h5v4" stroke="#e6edf4" fill="none" /></svg>
      <span class="time">17:05</span>
      <button class="peek" aria-label="Показать рабочий стол"></button>
    </div>
  </div>
</template>

<style>
body { background: #fff; }
</style>

<style scoped>
.window { display: flex; flex-direction: column; min-height: 100vh; margin-right: 8px; overflow: hidden; font-family: Roboto, "Open Sans", "Noto Sans", sans-serif; font-size: 8px; line-height: 10px; color: #222; }
button { font: inherit; color: inherit; background: none; border: 0; padding: 0; margin: 0; flex: none; }
svg { display: block; }
.titlebar { display: flex; align-items: center; height: 20px; box-sizing: border-box; padding-left: 5px; border-top: 1px solid #666; background: linear-gradient(#a4c8ef, #b9d7f8 60%, #a9cdf2); border-bottom: 1px solid #7c95ad; }
.app-icon { width: 11px; height: 11px; flex: none; }
h1 { margin: 0 0 0 4px; font-size: 8px; font-weight: 400; line-height: 12px; white-space: nowrap; color: #111; width: 192px; flex: none; }
.account { position: relative; }
.account::after { content: ""; position: absolute; left: 17px; right: 0; top: 0; height: 4px; background: #f3f7fb; border-radius: 2px; }
.ghost { filter: blur(1px); color: #5e7d9e; opacity: .7; white-space: nowrap; flex: none; }
.ghost.first { width: 82px; }
.ghost.cross { width: 28px; text-align: center; }
.ghost.dot { width: 10px; height: 10px; border-radius: 5px; background: #111; margin: 0 6px 0 6px; opacity: .9; }
.aero { flex: 1; align-self: stretch; background: linear-gradient(transparent 50%, #86b6e2 95%), linear-gradient(90deg, #4f7a7e, #6fa0b4 7%, #2b474e 10%, #345a60 20%, #14212b 27%, #5f9499 34%, #47757a 40%, #6fa2b0 50%, #23363f 58%, #1b2c36 65%, #8fb9d8 70%, #1f3038 74%, #4c6068 83%, #33484f 91%, #64a098 96%, #20343c); }
.win-buttons { display: flex; align-self: flex-start; }
.win-buttons button { width: 19px; height: 12px; border: 1px solid #c5d0d6; border-top: 0; box-sizing: border-box; background: linear-gradient(#8b9ba1, #4b5a60); border-radius: 0 0 2px 2px; }
.win-buttons .close { width: 28px; background: linear-gradient(#d98a78, #c03a20 50%, #b93018); }
.win-buttons svg { width: 100%; height: 11px; }
.body { flex: 1; display: flex; flex-direction: column; padding-left: 1px; background: #f0f0f0; border-left: 5px solid #b4cfec; }
.menubar { display: flex; align-items: center; height: 14px; border-bottom: 1px solid #c8c8c8; box-sizing: border-box; background: #f3f3f3; }
.menu-icon { width: 10px; height: 10px; margin: 0 0 0 2px; }
.menubar > button { padding: 0 6px; line-height: 12px; }
.mdi { display: flex; margin-left: auto; gap: 1px; }
.mdi button { width: 12px; height: 12px; background: #dceafa; border: 1px solid #b4cbe2; box-sizing: border-box; }
.toolbar { display: flex; align-items: stretch; height: 18px; box-sizing: border-box; }
.draw { border-top: 1px solid #fafafa; }
.group { display: flex; align-items: center; padding: 0 2px; border-left: 1px solid #bbb; box-shadow: -1px 0 #fff; flex: none; }
.tool { position: relative; display: flex; align-items: center; justify-content: center; width: 19px; height: 16px; box-sizing: border-box; }
.tool svg { width: 12px; height: 12px; flex: none; }
.tool.menu { width: 24px; justify-content: flex-start; padding-left: 2px; gap: 2px; }
.tool.labelled { width: auto; padding: 0 3px 0 2px; gap: 1px; }
.tool.labelled span { font-family: "Open Sans", sans-serif; }
.tool.pressed { background: #f9f9f9; border: 1px solid #bcbcbc; border-right-color: #fff; border-bottom-color: #fff; }
.draw .tool:nth-child(3n) { width: 18px; }
.draw .tool.period { font-size: 7px; color: #444; }
.caret { border: 2px solid transparent; border-top: 3px solid #222; border-bottom: 0; }
.g1 { margin-left: 3px; padding: 0 3px 0 2px; }
.g2 { padding: 0 2px 0 0; }
.g3 { padding: 0 4px 0 0; }
.g4 { padding: 0 0 0 3px; }
.g6 { padding: 0 2px 0 0; }
.g7 { padding: 0 2px; border-right: 1px solid #bbb; }
.d1 { margin-left: 2px; padding: 0 3px 0 0; }
.d2 { padding: 0 3px 0 1px; }
.d3 { border-right: 1px solid #bbb; }
.right-tools { display: flex; align-items: center; gap: 8px; margin-left: auto; padding-right: 1px; }
.plain svg { width: 10px; height: 10px; }
.notice svg { width: 15px; height: 15px; }
.chart { width: 100%; height: auto; }
.chart .small { font-family: "Open Sans", sans-serif; font-size: 6px; fill: #fff; }
.chart .current { font-family: "Open Sans", sans-serif; font-size: 6px; fill: #000; }
.chart .mono { font-family: "Liberation Mono", monospace; font-size: 8px; fill: #c8c8c8; }
.chart .comment { font-family: Roboto, sans-serif; font-size: 9px; }
.bull path { stroke: #00c864; }
.bull rect { fill: #00ff7f; }
.bear path { stroke: #c80000; }
.bear rect { fill: #f00; }
.band { fill: none; }
.band .stems { stroke-dasharray: 2 1.400; }
.band .outer { stroke-width: 1.300; }
.down .stems { stroke: #a000a8; }
.down .inner { stroke: #b414b8; }
.down .outer { stroke: #f0f; }
.up .stems { stroke: #0a9a9a; }
.up .inner { stroke: #10a8a8; }
.up .outer { stroke: #0ff; }
.chart-tabs { display: flex; align-items: flex-start; height: 17px; border-top: 1px solid #555; border-bottom: 1px solid #999; box-sizing: border-box; color: #888; }
.chart-tabs > button { height: 12px; padding: 0 7px; margin-top: 1px; border-right: 1px solid #888; line-height: 11px; }
.chart-tabs > button:first-child { padding: 0 8px 0 11px; border-right: 0; }
.chart-tabs > button.active { background: #fff; color: #111; height: 13px; margin-top: 0; border: 1px solid #444; border-top: 0; line-height: 13px; }
.scrollers { display: flex; gap: 10px; margin: 3px 4px 0 auto; }
.scrollers i { display: block; border: 2px solid transparent; }
.scrollers .left { border-right-color: #777; border-left: 0; }
.scrollers .next { border-left-color: #777; border-right: 0; }
.terminal { flex: 1; display: flex; min-height: 200px; }
aside { width: 10px; display: flex; flex-direction: column; }
.x { width: 8px; height: 9px; }
.x svg { width: 6px; height: 6px; margin: 0 1px; }
.strip { flex: 1; display: flex; align-items: flex-end; background: linear-gradient(#bcd3ee, #9db8d6); }
.strip span { writing-mode: vertical-rl; transform: rotate(180deg); line-height: 10px; padding-top: 4px; color: #222; }
.content { flex: 1; display: flex; flex-direction: column; min-width: 0; }
.history { position: relative; flex: 1; background: #fff; }
table { width: 100%; table-layout: fixed; border-collapse: separate; border-spacing: 0; }
th { height: 17px; box-sizing: border-box; padding: 2px 3px 0; font-weight: 400; text-align: right; border-right: 1px solid #e2e2e2; border-bottom: 1px solid #ddd; background: linear-gradient(#fff 50%, #f3f4f6); line-height: 12px; }
th:first-child { text-align: left; padding-left: 4px; }
th.sorted { padding-right: 5px; }
th span { margin-left: 8px; color: #888; }
td { height: 13px; box-sizing: border-box; padding: 0 1px; font-family: "Open Sans", sans-serif; font-size: 7px; line-height: 12px; text-align: right; border-right: 1px solid #d8d8d8; white-space: nowrap; color: #111; }
td:last-child, th:last-child { border-right: 0; padding-right: 3px; }
td.word { font-family: inherit; font-size: 8px; }
tbody tr:nth-child(3n+1) td { height: 14px; }
tbody tr:nth-child(10) td { height: 13px; }
tbody tr:nth-child(even) { background: #ebebeb; }
td.id { text-align: left; }
td.id svg { display: inline-block; width: 10px; height: 10px; margin: 0 3px 0 1px; vertical-align: middle; }
tfoot td { height: 14px; background: #c6c6c6; font-family: inherit; font-size: 8px; font-weight: 700; border: 0; text-align: left; }
tfoot td:last-child { text-align: right; }
.bullet { display: inline-block; width: 4px; height: 4px; box-sizing: border-box; border: 1px solid #999; border-radius: 2px; margin: 0 6px 0 4px; }
.mask { position: absolute; background: #fff; }
.mask.open { left: 217px; top: 14px; width: 99px; height: 133px; }
.mask.closed { left: 917px; top: 31px; width: 102px; height: 121px; }
.terminal-tabs { display: flex; height: 17px; border-top: 1px solid #555; border-bottom: 1px solid #c4c4c4; box-sizing: border-box; color: #888; align-items: flex-start; }
.terminal-tabs button { position: relative; height: 13px; padding: 0 6px 0 7px; line-height: 12px; }
.terminal-tabs button:first-child { padding-left: 8px; }
.terminal-tabs button::after { content: ""; position: absolute; right: 0; top: 3px; height: 8px; border-right: 1px solid #888; }
.terminal-tabs button.active { color: #111; background: #fff; border: 1px solid #444; border-top: 0; padding: 0 5px; }
.terminal-tabs button.active::after { display: none; }
sub { font-size: 6px; line-height: 6px; font-weight: 700; color: #f03030; vertical-align: -2px; }
.status { display: flex; height: 10px; overflow: hidden; font-size: 7px; line-height: 18px; }
.status span { font-family: "Open Sans", sans-serif; border-left: 1px solid #c4c4c4; padding-left: 3px; flex: none; box-sizing: border-box; white-space: nowrap; }
.status .hint { font-family: inherit; flex: 1; border: 0; padding-left: 1px; font-size: 8px; }
.s1 { width: 77px; } .s2 { width: 69px; } .s3 { width: 47px; } .s4 { width: 48px; } .s5 { width: 46px; } .s6 { width: 47px; } .s7 { width: 45px; } .s8 { width: 96px; display: flex; gap: 3px; }
.s8 svg { width: 16px; height: 8px; margin-top: 4px; }
.taskbar { display: flex; height: 11px; overflow: hidden; background: linear-gradient(#a8c5ea, #6f92b8 30%, #1c303e 65%, #14222d); color: #fff; }
.orb { width: 34px; height: 28px; } .orb svg { width: 24px; height: 24px; margin: 2px 0 0 2px; }
.task { width: 40px; height: 28px; margin-right: 2px; border-radius: 2px; }
.task:nth-child(even) { margin-right: 1px; }
.task svg { width: 20px; height: 20px; margin: 2px auto 0; }
.task.lit { background: linear-gradient(100deg, #a9c0d4, #3c5264); border: 1px solid #9fb4c6; box-sizing: border-box; }
.task.running { background: linear-gradient(100deg, #cfdde6, #8fa5b6); border: 1px solid #dfe8ef; box-sizing: border-box; }
.lang { margin-left: auto; line-height: 24px; font-size: 7px; }
.tray { width: 50px; height: 10px; margin: 4px 24px 0 16px; }
.time { line-height: 18px; margin-right: 15px; }
.peek { width: 10px; height: 11px; border-left: 1px solid #8aa6c0; background: linear-gradient(#a8c5ea, #48627a); }
</style>
